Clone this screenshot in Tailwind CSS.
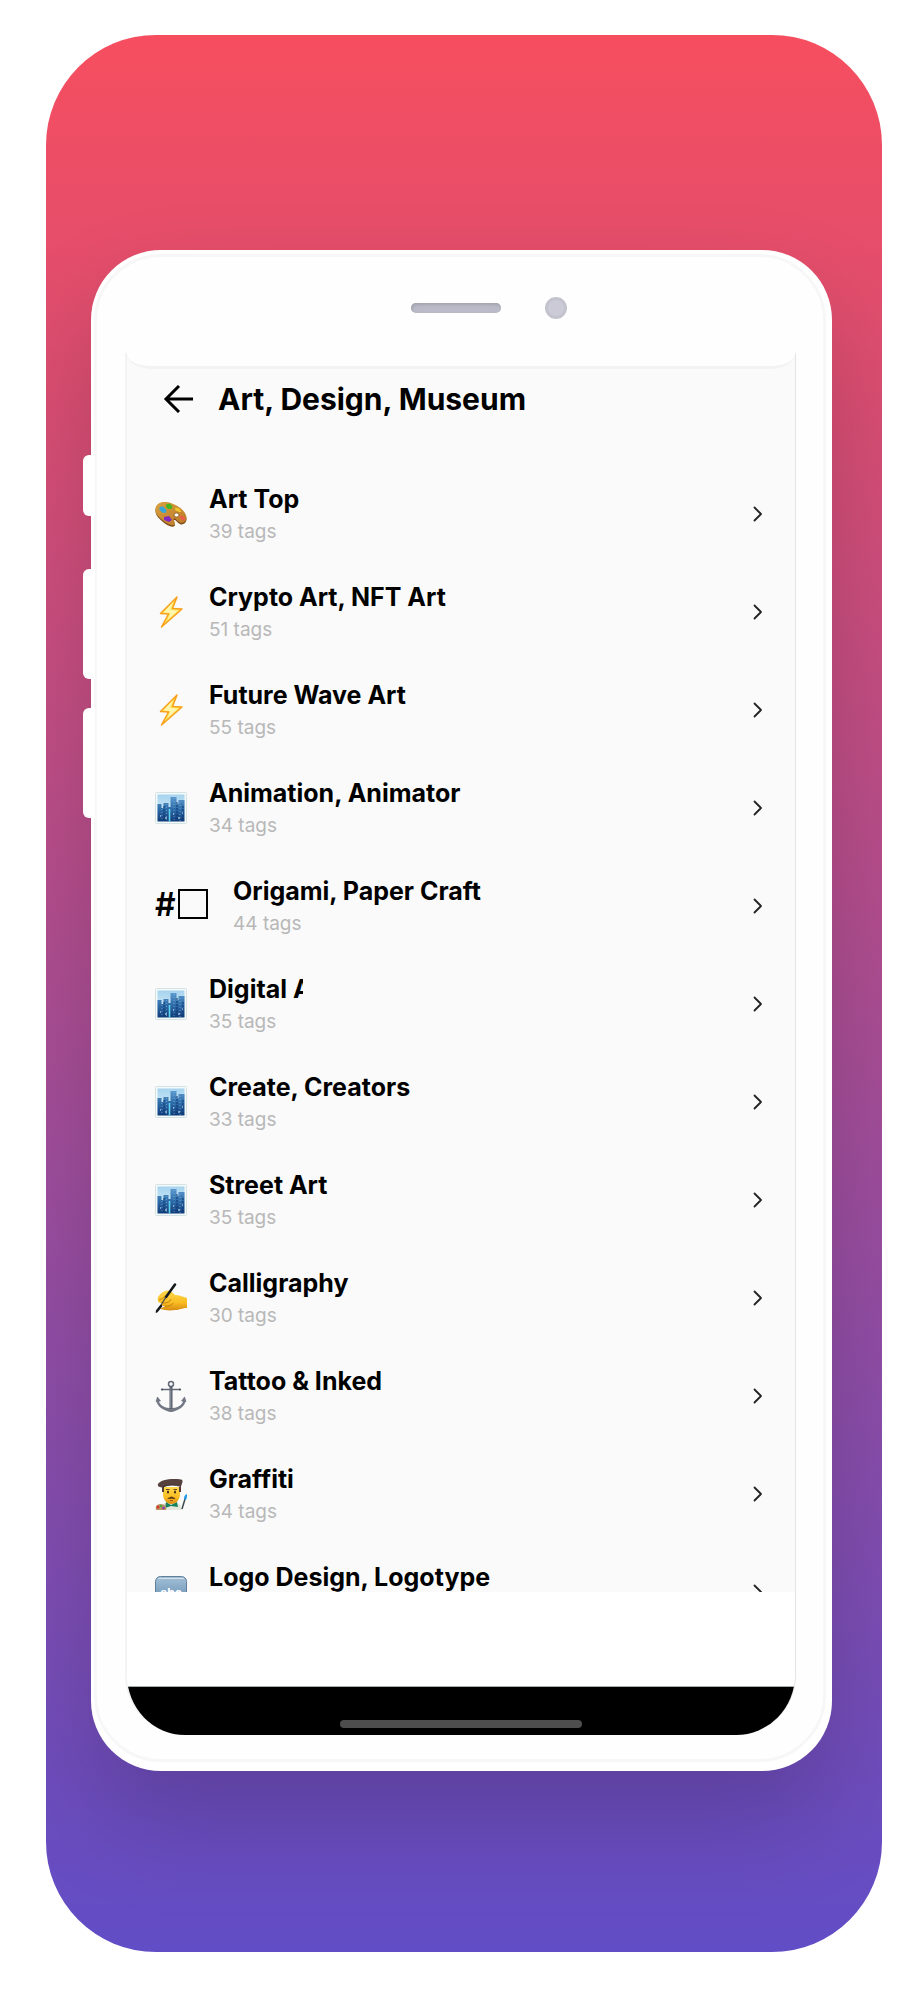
<!DOCTYPE html>
<html lang="en">
<head>
<meta charset="utf-8">
<meta name="viewport" content="width=device-width, initial-scale=1">
<title>Art, Design, Museum</title>
<script src="https://cdn.jsdelivr.net/npm/@tailwindcss/browser@4"></script>
</head>
<body class="bg-white pt-[35px] pr-[42px] pb-12 pl-[46px] font-['Inter',sans-serif] text-black">

<svg class="absolute size-0" aria-hidden="true">
  <defs>
    <linearGradient id="wood" x1="0" y1="0" x2="1" y2="1"><stop offset="0" stop-color="#d9a03d"/><stop offset=".55" stop-color="#c98a32"/><stop offset="1" stop-color="#b87a28"/></linearGradient>
    <linearGradient id="sky" x1="0" y1="0" x2="0" y2="1"><stop offset="0" stop-color="#a5d3ee"/><stop offset="1" stop-color="#e8f6fb"/></linearGradient>
    <linearGradient id="tower" x1="0" y1="0" x2="0" y2="1"><stop offset="0" stop-color="#5b98cd"/><stop offset=".5" stop-color="#2d6ba8"/><stop offset="1" stop-color="#0f3b78"/></linearGradient>
    <linearGradient id="skin" x1="0" y1="0" x2="0" y2="1"><stop offset="0" stop-color="#ffd84a"/><stop offset=".6" stop-color="#f8bd22"/><stop offset="1" stop-color="#d98a12"/></linearGradient>
    <linearGradient id="tile" x1="0" y1="0" x2="0" y2="1"><stop offset="0" stop-color="#a3bfd6"/><stop offset="1" stop-color="#5b87ad"/></linearGradient>
  </defs>
  <symbol id="palette" viewBox="0 0 32 32">
    <path d="M.5 11C1 4 9 2.500 17 5.500c8 3 15 9 14.500 15.500-.5 4-5 5.500-7.500 3.500-2-1.500-3.500-4-5-3.500-1.500 1 2 3.500.5 6-2 2-8-.5-11.500-4C4 20 0 16 .5 11z" transform="translate(0 1)" fill="#7b4a16"/>
    <path d="M.5 11C1 4 9 2.500 17 5.500c8 3 15 9 14.500 15-.5 4-5 5.500-7.500 3.500-2-1.500-3.500-4-5-3.500-1.500 1 2 3.500.5 6-2 2-8-.5-11.500-4C4 19.500 0 16 .5 11z" fill="url(#wood)"/>
    <ellipse cx="21.500" cy="17" rx="2.500" ry="2" fill="#fff" stroke="#7b4a16" stroke-width=".7"/>
    <path d="M4.500 9l3.500-.5 3 3 .5 3-3.500.5-3.500-3z" fill="#35a8d8"/><path d="M11 6.500l3.500-1 3 2.500-1 3-3.500 0-2-2z" fill="#45b51f"/>
    <path d="M20.500 9.500l3.500 1 2.500 3.500-2.500 0-4-2z" fill="#efc92f"/><path d="M9 19l5-1 3 4-3 2-5-2z" fill="#8328bd"/><path d="M25.500 17.500l3.500 1.500 1.500 3-3 .5-3-3z" fill="#ee5a4c"/>
  </symbol>
  <symbol id="bolt" viewBox="0 0 32 32">
    <path d="M22 1L5.500 17.500l8 .5L6.500 31 27 13l-9.500-.5z" fill="#fde35a" stroke="#f9a01b" stroke-width="1.500" stroke-linejoin="round"/>
    <path d="M18 6l-9.500 10.500 7 .5-3 7 10.500-9.500-8-.5z" fill="#fff6b0"/>
  </symbol>
  <symbol id="city" viewBox="0 0 32 32">
    <rect x=".5" y=".5" width="31" height="31" rx="1" fill="#f5f9f9" stroke="#d5e2e4"/>
    <rect x="2.500" y="2.500" width="27" height="27" fill="url(#sky)"/>
    <path d="M2.500 29.500V12h4v4h2v-5h5v4h2V5h6v7h2V8h6v21.500z" fill="url(#tower)"/>
    <path d="M7 17v12M11.500 12v17M19 6v23M25 10v19" stroke="#8dbde5" stroke-width=".6" stroke-dasharray="1 2"/>
    <path d="M9 14v15M22 10v19M28 14v14" stroke="#0d3771" stroke-dasharray="2 1"/>
    <path d="M14.500 17v12.500" stroke="#5fd4ef" stroke-width="1.600"/>
    <path d="M5 24h1M18 22h1M23 26h2M27 21h1M10 26h2" stroke="#e7f5ff"/>
  </symbol>
  <symbol id="writing" viewBox="0 0 32 32">
    <path d="M3 15c4-6 9-8 14-5l3 3c5 0 8 2 12 3v10c-5 0-7 2-12 2-6 1-10 0-15-1l5-3c-4 0-4-2-2-3-4 1-6-2-5-6z" fill="url(#skin)"/>
    <path d="M4 18c4-1 7-5 10-6M8 21c4 0 7-1 8-4M10 24c4 1 7-1 8-3" fill="none" stroke="#b9730e" stroke-width=".8"/>
    <path d="M20 2.500L11 15M6 24l-4 5" stroke="#15191c" stroke-width="2.600" stroke-linecap="round"/><path d="M11 15l-5 8" stroke="#4b4640" stroke-width="1.200"/><path d="M3 27l-2 4" stroke="#222" stroke-width="1"/>
  </symbol>
  <symbol id="anchor" viewBox="0 0 32 32">
    <circle cx="16" cy="4" r="2.500" fill="none" stroke="#656b78" stroke-width="1.500"/>
    <path d="M16 6.500V30" stroke="#565c69" stroke-width="3"/><path d="M15.700 8v20" stroke="#8d93a0" stroke-width="1"/>
    <path d="M7 9.500h18" stroke="#626875" stroke-width="1.500"/><circle cx="7" cy="9.500" r="1.100" fill="#454b57"/><circle cx="25" cy="9.500" r="1.100" fill="#454b57"/>
    <path d="M1 21.500L2.500 17l3 4-2 .3C5 26 10 28.500 16 28.500S27 26 28.500 21.300l-2-.3 3-4 1.500 4.500-1 .3C28.500 28 22 30 16 32 10 30 3.500 28 2 21.800z" fill="#747a87" stroke="#4f5562" stroke-width=".5"/>
  </symbol>
  <symbol id="artist" viewBox="0 0 32 32">
    <path d="M6 32c0-6 4-8 10-8s10 2 11 8z" fill="#e6e6dc"/><path d="M11 24l5 3 6-3 1 5-7-1-6 2z" fill="#16815c"/>
    <path d="M8 9h17v7c0 6-4 10-8.500 10S8 22 8 16z" fill="url(#skin)"/>
    <path d="M7 9v5h2V9zM24 9v5h2V9z" fill="#573b33"/>
    <ellipse cx="13" cy="14" rx="1" ry="1.500" fill="#3b2419"/><ellipse cx="20" cy="14" rx="1" ry="1.500" fill="#3b2419"/>
    <path d="M11 11.500h3.500M18.500 11.500H22" stroke="#6b421b"/><path d="M12.500 20c2 0 3-1.500 4-1.500s2 1.500 4 1.500c-1 1.500-3 1-4 .5-1 .5-3 1-4-.5z" fill="#5b3511"/><path d="M15 22.500h3" stroke="#b8521c"/>
    <path d="M3 6C5 2 16 0 26 1.500c3 .5 1 4 0 7-6-2-13-2-18 1-3 0-6-1-5-3.500z" fill="#56413f"/><path d="M8 9c5-2.500 12-2.500 18-.5" stroke="#36282a" fill="none"/>
    <path d="M1 32c-1-4 1-6 5-6s6 3 5 6z" fill="#bd9366"/><circle cx="3" cy="29" r="1.500" fill="#d5372e"/><circle cx="6" cy="28" r="1.300" fill="#48a83b"/><circle cx="8.500" cy="30" r="1.300" fill="#8037b0"/>
    <path d="M27 31l3-10" stroke="#3c4a50" stroke-width="1.500"/><path d="M29 21c0-3 1-4 3-5 0 3 0 5-1.500 6z" fill="#2497e4"/>
  </symbol>
  <symbol id="abc" viewBox="0 0 32 32">
    <rect x=".5" y=".5" width="31" height="31" rx="5" fill="url(#tile)" stroke="#5f7f9b"/>
    <path d="M3 2.500h26" stroke="#d2e1ec" stroke-width="1"/>
    <text x="16" y="21" text-anchor="middle" font-family="Inter, sans-serif" font-weight="700" font-size="12" fill="#fff">abc</text>
  </symbol>
  <symbol id="chevron" viewBox="0 0 10 16"><path d="M1.500 1.500L8 8l-6.500 6.500" fill="none" stroke="#222" stroke-width="1.800" stroke-linecap="round" stroke-linejoin="round"/></symbol>
</svg>

<main class="overflow-hidden rounded-[110px] bg-linear-to-b/srgb from-[#f64e5f] to-[#614dc6] pt-[215px] pr-[50px] pb-[181px] pl-[45px]">
  <div class="relative rounded-[70px] bg-white pt-1 pr-[6px] pb-[9px] pl-[3px] shadow-[0_50px_100px_rgba(0,0,0,0.17)]">
    <span class="absolute top-[205px] -left-2 h-[61px] w-3 rounded-l-md bg-white"></span>
    <span class="absolute top-[319px] -left-2 h-[110px] w-3 rounded-l-md bg-white"></span>
    <span class="absolute top-[458px] -left-2 h-[110px] w-3 rounded-l-md bg-white"></span>

    <div class="rounded-[67px] border-3 border-[#f7f7f7] bg-[#fefefe] pr-[27px] pb-6 pl-7">
      <div class="flex h-24 items-center justify-center gap-11 pt-[6px] pl-[57px]">
        <span class="h-[10px] w-[90px] rounded-full bg-[#bbbac8] shadow-[inset_1px_2px_3px_#a4a4b0]"></span>
        <span class="size-[22px] rounded-full border-3 border-[#c3c3cd] bg-[#cbcad6]"></span>
      </div>

      <div class="overflow-hidden rounded-b-[60px] border-r border-l-2 border-l-[#f3f3f3] border-r-[#e5e5e5] bg-white">
        <div class="bg-[#fafafa]">
          <div class="h-4 border-b-3 border-[#f3f3f3] bg-[#fefefe] [border-radius:0_0_24px_24px/0_0_15px_15px]"></div>
          <header class="flex h-[60px] items-center gap-6 pl-[35px]">
            <button type="button" aria-label="Back" class="shrink-0">
              <svg class="h-7 w-8" viewBox="0 0 32 28" fill="none" stroke="#000" stroke-width="3"><path d="M31 14H4M17 1L4 14l13 13"/></svg>
            </button>
            <h1 class="text-[30px] leading-9 font-bold whitespace-nowrap">Art, Design, Museum</h1>
          </header>
        </div>

        <nav class="h-[1163px] overflow-hidden bg-[#fafafa] pt-9">
          <a href="#" class="flex h-[98px] items-center gap-[22px] pr-8 pl-7"><svg class="size-8 shrink-0"><use href="#palette"/></svg><span class="flex-1"><b class="block text-[25px] leading-8 font-bold">Art Top</b><span class="block pt-[3px] text-[19px] leading-7 text-[#b8b8b8]">39 tags</span></span><svg class="h-4 w-[10px]"><use href="#chevron"/></svg></a>
          <a href="#" class="flex h-[98px] items-center gap-[22px] pr-8 pl-7"><svg class="size-8 shrink-0"><use href="#bolt"/></svg><span class="flex-1"><b class="block text-[25px] leading-8 font-bold">Crypto Art, NFT Art</b><span class="block pt-[3px] text-[19px] leading-7 text-[#b8b8b8]">51 tags</span></span><svg class="h-4 w-[10px]"><use href="#chevron"/></svg></a>
          <a href="#" class="flex h-[98px] items-center gap-[22px] pr-8 pl-7"><svg class="size-8 shrink-0"><use href="#bolt"/></svg><span class="flex-1"><b class="block text-[25px] leading-8 font-bold">Future Wave Art</b><span class="block pt-[3px] text-[19px] leading-7 text-[#b8b8b8]">55 tags</span></span><svg class="h-4 w-[10px]"><use href="#chevron"/></svg></a>
          <a href="#" class="flex h-[98px] items-center gap-[22px] pr-8 pl-7"><svg class="size-8 shrink-0"><use href="#city"/></svg><span class="flex-1"><b class="block text-[25px] leading-8 font-bold">Animation, Animator</b><span class="block pt-[3px] text-[19px] leading-7 text-[#b8b8b8]">34 tags</span></span><svg class="h-4 w-[10px]"><use href="#chevron"/></svg></a>
          <a href="#" class="flex h-[98px] items-center gap-[22px] pr-8 pl-7"><span class="flex w-14 shrink-0 items-end justify-between pr-[3px] pb-1"><span class="text-[32px] leading-7 font-semibold">#</span><span class="size-[30px] border-2 border-black"></span></span><span class="flex-1"><b class="block text-[25px] leading-8 font-bold">Origami, Paper Craft</b><span class="block pt-[3px] text-[19px] leading-7 text-[#b8b8b8]">44 tags</span></span><svg class="h-4 w-[10px]"><use href="#chevron"/></svg></a>
          <a href="#" class="flex h-[98px] items-center gap-[22px] pr-8 pl-7"><svg class="size-8 shrink-0"><use href="#city"/></svg><span class="flex-1"><b class="block w-[94px] overflow-hidden text-[25px] leading-8 font-bold whitespace-nowrap">Digital A</b><span class="block pt-[3px] text-[19px] leading-7 text-[#b8b8b8]">35 tags</span></span><svg class="h-4 w-[10px]"><use href="#chevron"/></svg></a>
          <a href="#" class="flex h-[98px] items-center gap-[22px] pr-8 pl-7"><svg class="size-8 shrink-0"><use href="#city"/></svg><span class="flex-1"><b class="block text-[25px] leading-8 font-bold">Create, Creators</b><span class="block pt-[3px] text-[19px] leading-7 text-[#b8b8b8]">33 tags</span></span><svg class="h-4 w-[10px]"><use href="#chevron"/></svg></a>
          <a href="#" class="flex h-[98px] items-center gap-[22px] pr-8 pl-7"><svg class="size-8 shrink-0"><use href="#city"/></svg><span class="flex-1"><b class="block text-[25px] leading-8 font-bold">Street Art</b><span class="block pt-[3px] text-[19px] leading-7 text-[#b8b8b8]">35 tags</span></span><svg class="h-4 w-[10px]"><use href="#chevron"/></svg></a>
          <a href="#" class="flex h-[98px] items-center gap-[22px] pr-8 pl-7"><svg class="size-8 shrink-0"><use href="#writing"/></svg><span class="flex-1"><b class="block text-[25px] leading-8 font-bold">Calligraphy</b><span class="block pt-[3px] text-[19px] leading-7 text-[#b8b8b8]">30 tags</span></span><svg class="h-4 w-[10px]"><use href="#chevron"/></svg></a>
          <a href="#" class="flex h-[98px] items-center gap-[22px] pr-8 pl-7"><svg class="size-8 shrink-0"><use href="#anchor"/></svg><span class="flex-1"><b class="block text-[25px] leading-8 font-bold">Tattoo &amp; Inked</b><span class="block pt-[3px] text-[19px] leading-7 text-[#b8b8b8]">38 tags</span></span><svg class="h-4 w-[10px]"><use href="#chevron"/></svg></a>
          <a href="#" class="flex h-[98px] items-center gap-[22px] pr-8 pl-7"><svg class="size-8 shrink-0"><use href="#artist"/></svg><span class="flex-1"><b class="block text-[25px] leading-8 font-bold">Graffiti</b><span class="block pt-[3px] text-[19px] leading-7 text-[#b8b8b8]">34 tags</span></span><svg class="h-4 w-[10px]"><use href="#chevron"/></svg></a>
          <a href="#" class="flex h-[98px] items-center gap-[22px] pr-8 pl-7"><svg class="size-8 shrink-0"><use href="#abc"/></svg><span class="flex-1 pb-[31px]"><b class="block text-[25px] leading-8 font-bold">Logo Design, Logotype</b></span><svg class="h-4 w-[10px]"><use href="#chevron"/></svg></a>
        </nav>

        <div class="h-[95px] border-b border-[#a5b0ac]"></div>
        <div class="flex h-12 items-end justify-center bg-black pb-[7px]">
          <span class="h-2 w-[242px] rounded-full bg-[#4d4d4d]"></span>
        </div>
      </div>
    </div>
  </div>
</main>
</body>
</html>
